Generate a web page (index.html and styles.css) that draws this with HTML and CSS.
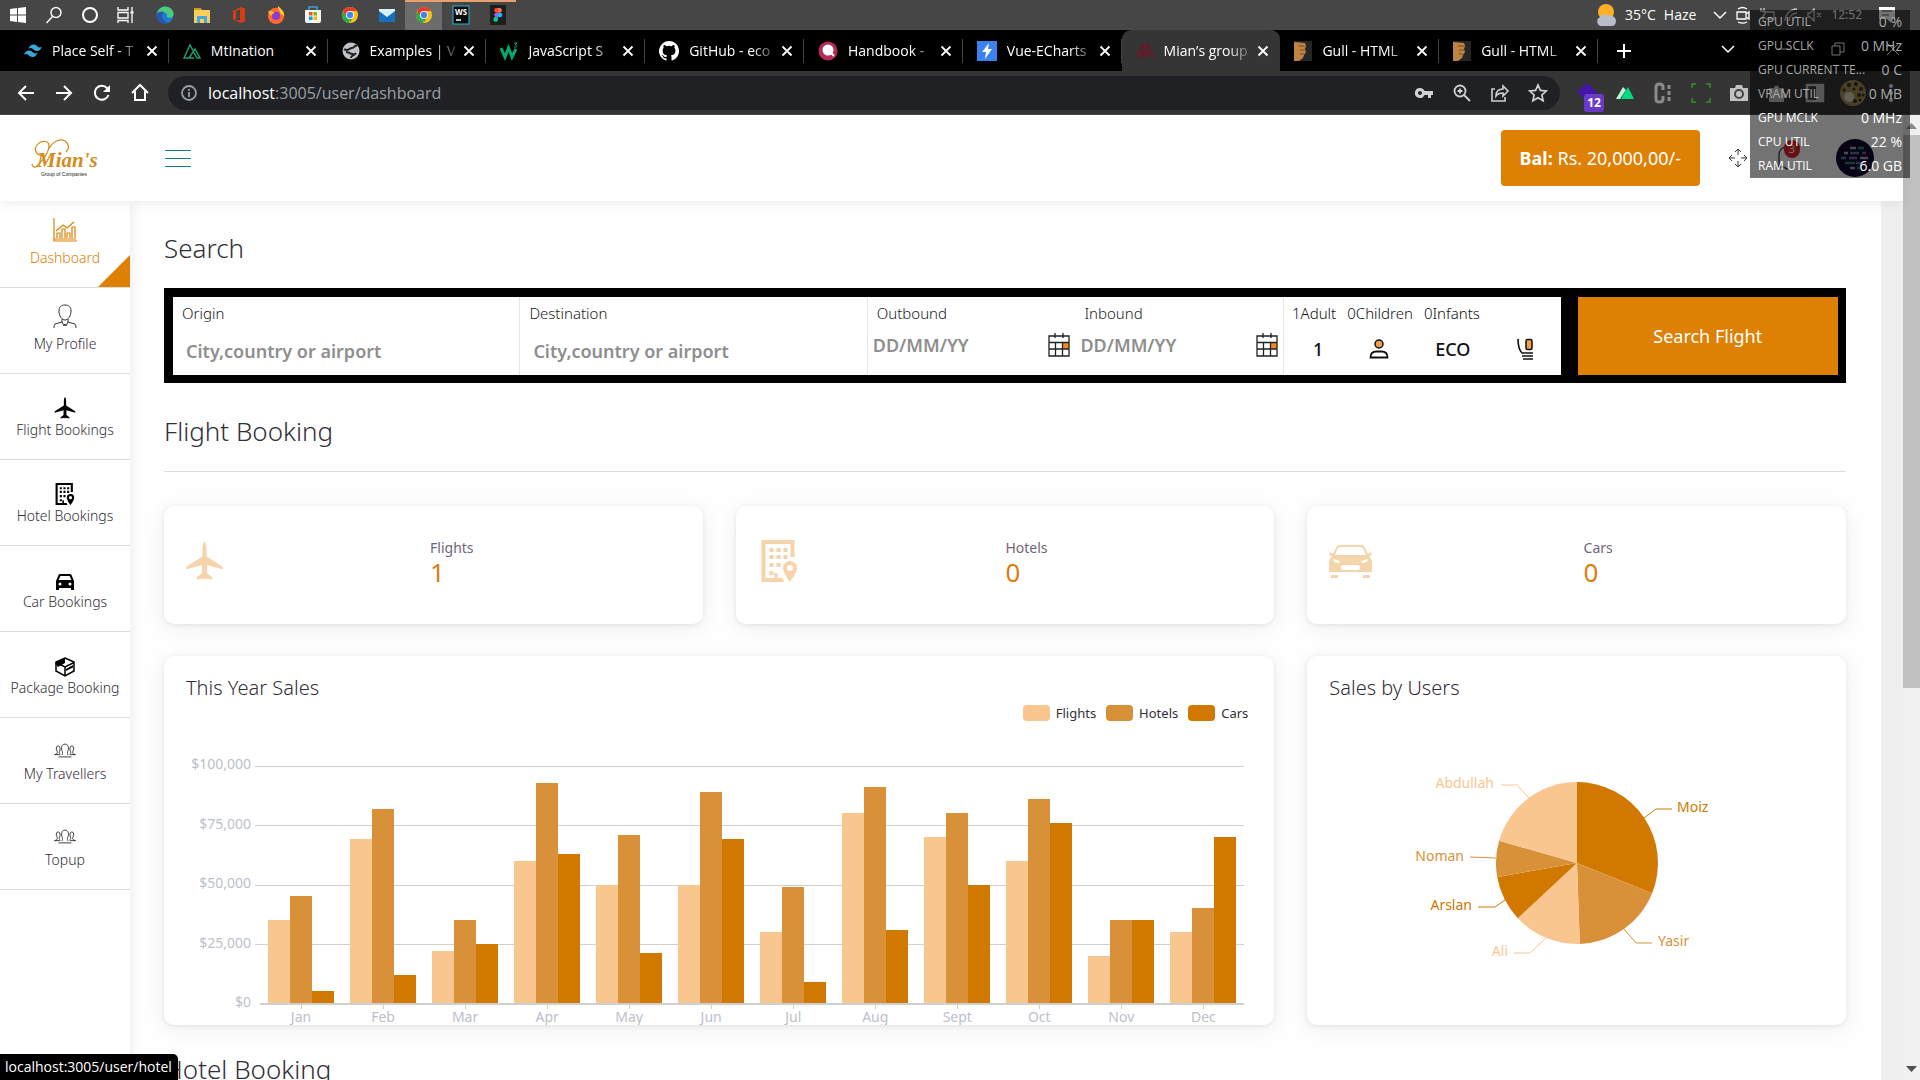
FILE: index.html
```html
<!DOCTYPE html>
<html lang="en">
<head>
<meta charset="utf-8">
<title>Mian's group</title>
<link rel="stylesheet" href="styles.css">
</head>
<body>
<svg class="defs" aria-hidden="true">
  <defs>
    <symbol id="x" viewBox="0 0 12 12"><path d="M1.500 1.500l9 9M10.500 1.500l-9 9" fill="none" stroke="currentColor" stroke-width="1.800"/></symbol>
    <symbol id="chevron" viewBox="0 0 14 14"><path d="M1 4l6 6 6-6" fill="none" stroke="currentColor" stroke-width="1.500"/></symbol>
    <symbol id="chrome" viewBox="0 0 20 20">
      <circle cx="10" cy="10" r="9" fill="#fbc116"/>
      <path d="M2.200 5.500A9 9 0 0 1 17.800 5.500H10A4.500 4.500 0 0 0 6.100 12.200z" fill="#e33b2e"/>
      <path d="M2.200 5.500L6.100 12.200A4.500 4.500 0 0 0 10 14.500L9 19A9 9 0 0 1 2.200 5.500z" fill="#2da94f"/>
      <path d="M10 14.500l3.800-2.300L9.500 19z" fill="#2da94f"/>
      <circle cx="10" cy="10" r="4.400" fill="#fff"/><circle cx="10" cy="10" r="3.500" fill="#4284f4"/>
    </symbol>
    <symbol id="plane" viewBox="0 0 36 38"><path d="M18 0c1.500 1.500 2 5 2 8v6.500l15 9.500c1 .8 1 2.500.8 3L20.500 23v8l5 3.800V37L19 36l-1 1.500L17 36l-6.500 1v-2.200l5-3.800v-8L.2 27c-.2-.5-.2-2.200.8-3l15-9.500V8c0-3 .5-6.500 2-8z" fill="currentColor"/></symbol>
    <symbol id="hotel" viewBox="0 0 36 42">
      <path d="M0 0h33v17h-4V4H4v34h9v-5h3v5h5l2 4H0z" fill="currentColor"/>
      <path d="M8 8h4v4H8zm7 0h4v4h-4zm7 0h4v4h-4zM8 15h4v4H8zm7 0h4v4h-4zm7 0h4v4h-4zM8 23h4v4H8zm7 0h4v4h-4zM8 31h4v4H8z" fill="currentColor"/>
      <path d="M28.500 21a7 7 0 0 1 7 7c0 5-7 14-7 14s-7-9-7-14a7 7 0 0 1 7-7zm0 4a3 3 0 1 0 0 6 3 3 0 0 0 0-6z" fill="currentColor"/>
    </symbol>
    <symbol id="people" viewBox="0 0 24 16">
      <g fill="none" stroke="currentColor" stroke-width="1">
        <path d="M9 9C7.500 6 8 1 12 1s4.500 5 3 8c-.5 2-.5 3 .5 4M9 9c.5 2 .5 3-.5 4M5 15h14"/>
        <path d="M3.500 9C2 7 2 3 4.500 3S7 7 6 9c-.5 1-.5 2 1 3M3.500 9c.5 2 0 3-3 3.500h6"/>
        <path d="M20.500 9C22 7 22 3 19.500 3S17 7 18 9c.5 1 .5 2-1 3M20.500 9c-.5 2 0 3 3 3.500h-6"/>
      </g>
    </symbol>
    <symbol id="calendar" viewBox="0 0 22 24">
      <path d="M14 10h7v6h-7z" fill="#f08c1e"/>
      <path d="M1 3h20v20H1zM1 9.500h20M1 16h20M7.500 9.500V23M14.500 9.500V23M7 0v5M15 0v5" fill="none" stroke="#222" stroke-width="1.300"/>
    </symbol>
    <symbol id="gull" viewBox="0 0 18 20"><path d="M0 0h18v20H0z" fill="#262626"/><path d="M0 1l11 1 1 3-1 3 1 3-2 3-1 3-4 3H0z" fill="#bd8443"/><path d="M5 5h6M6 9h5M6 13h4" stroke="#7c4d20"/></symbol>
  </defs>
</svg>

<div class="screen">
  <div class="taskbar">
    <div class="task system"><svg width="18" height="18" viewBox="0 0 18 18"><path d="M1 3l7-1v6.500H1zM9 2l8-1v7.500H9zM1 9.500h7V16l-7-1zM9 9.500h8V17l-8-1z" fill="#fff"/></svg></div>
    <div class="task system"><svg width="18" height="18" viewBox="0 0 18 18"><g fill="none" stroke="#fff" stroke-width="1.400"><circle cx="11" cy="6.500" r="5"/><path d="M7.500 10.500L1.500 17"/></g></svg></div>
    <div class="task system"><svg width="18" height="18" viewBox="0 0 18 18"><circle cx="9" cy="9" r="7" fill="none" stroke="#fff" stroke-width="2"/></svg></div>
    <div class="task system"><svg width="18" height="18" viewBox="0 0 18 18"><g fill="none" stroke="#fff" stroke-width="1.300"><path d="M1 1v3h10V1M1 6.500h10v5.500H1zM1 17v-2.500h10V17M15 1v4M15 8v9"/><path d="M13.500 6.500h3" stroke-width="2.500"/></g></svg></div>
    <div class="task"><svg width="18" height="18" viewBox="0 0 20 20"><circle cx="10" cy="10" r="9.500" fill="#1a7fd0"/><path d="M1 8C3 2 9-1 14 1.500c5 2 6.500 7 5 9.500-2 3-7 2-7 1 1-2 0-5-4-5-3 0-6 0-7 1z" fill="#4ccb7a"/><path d="M1 9c3-4 7-3 8-2-3 1-4 9 4 11-7 4-13-2-12-9z" fill="#2c54b0"/></svg></div>
    <div class="task"><svg width="18" height="18" viewBox="0 0 18 18"><path d="M1 2h6l2 2h8v13H1z" fill="#f8cf5d"/><path d="M1 2h6l2 2H1z" fill="#d99a1c"/><path d="M4 10h10v7h-3v-4H7v4H4z" fill="#4aa3df"/></svg></div>
    <div class="task"><svg width="18" height="18" viewBox="0 0 18 18"><path d="M11 1l4 1.500v13L11 17l-7-3 6 .5V3.500L6 5v8l-3 1V5z" fill="#d93c12"/></svg></div>
    <div class="task"><svg width="18" height="18" viewBox="0 0 20 20"><circle cx="10" cy="11" r="9" fill="#ff6a2b"/><path d="M12 0c4 3 8 7 7 12-1-2-2-3-4-3 0-4-3-5-3-9z" fill="#ffcf33"/><circle cx="10" cy="11" r="4.500" fill="#8a3bd8"/><path d="M2 5c2 1 4 0 6 2 0 2-3 2-3 4-2-1-4-3-3-6z" fill="#ffb02e"/></svg></div>
    <div class="task"><svg width="18" height="18" viewBox="0 0 18 18"><path d="M5 4V1h8v3" fill="none" stroke="#39a0e5" stroke-width="1.500"/><path d="M1 4h16v11a2 2 0 0 1-2 2H3a2 2 0 0 1-2-2z" fill="#f4f4f4"/><path d="M5 6h3.500v3.500H5z" fill="#f25022"/><path d="M9.500 6H13v3.500H9.500z" fill="#7fba00"/><path d="M5 10.500h3.500V14H5z" fill="#00a4ef"/><path d="M9.500 10.500H13V14H9.500z" fill="#ffb900"/></svg></div>
    <div class="task"><svg width="18" height="18"><use href="#chrome"/></svg></div>
    <div class="task"><svg width="18" height="18" viewBox="0 0 18 18"><path d="M1 3h16v13H1z" fill="#2b8fdd"/><path d="M1 4l8 7 8-7v12H1z" fill="#1570c0"/><path d="M1 3h16v2l-8 6-8-6z" fill="#d9f0ff"/></svg></div>
    <div class="task open active"><svg width="18" height="18"><use href="#chrome"/></svg></div>
    <div class="task open"><svg width="18" height="20" viewBox="0 0 18 20"><rect x="1" y="1" width="16" height="18" fill="#0b0b0b" stroke="#25b7d3"/><text x="9" y="10" class="ws">WS</text><path d="M4 15h5" stroke="#fff" stroke-width="1.500"/></svg></div>
    <div class="task open"><svg width="18" height="20" viewBox="0 0 18 20"><rect x="1" width="16" height="20" fill="#1e1e1e"/><path d="M9 3H7.500a2.300 2.300 0 0 0 0 4.700H9z" fill="#f24e1e"/><path d="M9 3h1.500a2.300 2.300 0 0 1 0 4.700H9z" fill="#ff7262"/><path d="M9 7.700H7.500a2.300 2.300 0 0 0 0 4.600H9z" fill="#a259ff"/><circle cx="11" cy="10" r="2.300" fill="#1abcfe"/><path d="M9 12.300H7.500A2.300 2.300 0 1 0 9 14.700z" fill="#0acf83"/></svg></div>
    <div class="tray">
      <svg width="22" height="24" viewBox="0 0 22 24"><circle cx="11" cy="9" r="8" fill="#fdb022"/><path d="M5 23a5 5 0 0 1 0-9c1-3 7-4 9-1 4-1 7 2 7 5s-2 5-4 5z" fill="#b9bccb"/></svg>
      <span class="weather">35°C</span><span class="weather">Haze</span>
      <svg class="tray-chevron" width="14" height="14"><use href="#chevron"/></svg>
      <svg width="16" height="18" viewBox="0 0 16 18"><path d="M2 6h9v7H2zM11 8l3-2v7l-3-2M3 3c3-2 6-2 9 0M3 16c3 1.500 6 1.500 9 0" fill="none" stroke="#fff" stroke-width="1.300"/></svg>
      <svg width="16" height="16" viewBox="0 0 16 16"><path d="M4 5h11v7H7M2 1v4M5 1v3M1 4h5v3l-2 2v5" fill="none" stroke="#ccc" stroke-width="1.300"/></svg>
      <svg width="16" height="16" viewBox="0 0 16 16"><path d="M2 14A12 12 0 0 1 14 2M6 14a8 8 0 0 1 8-8M10 14a4 4 0 0 1 4-4" fill="none" stroke="#ccc" stroke-width="1.300"/></svg>
      <svg width="16" height="16" viewBox="0 0 16 16"><path d="M1 6h2l4-4v12l-4-4H1zM10 6l4 4M14 6l-4 4" fill="none" stroke="#ccc" stroke-width="1.300"/></svg>
      <span class="clock">12:52</span>
      <svg width="18" height="18" viewBox="0 0 18 18"><path d="M1 1h16v12h-4v4l-4-4H1z" fill="#fff"/><path d="M4 5h10M4 9h7" stroke="#555"/></svg>
    </div>
  </div>

  <div class="tabstrip">
    <div class="tabs">
      <div class="tab"><svg width="18" height="20" viewBox="0 0 18 20"><path d="M4.500 8q1.200-4.500 5-4.500c3.500 0 4 3 6 3q1.500 0 2.500-1.500-1.200 5-5 5c-3.500 0-4-3-6-3q-1.500 0-2.500 1zM0 14q1.200-4.500 5-4.500c3.500 0 4 3 6 3q1.500 0 2.500-1.500-1.200 5-5 5c-3.500 0-4-3-6-3Q1 13 0 14z" fill="#38a9dc"/></svg><span class="tab-title">Place Self - T</span><button class="tab-close" aria-label="Close tab"><svg width="12" height="12"><use href="#x"/></svg></button></div>
      <div class="tab"><svg width="18" height="20" viewBox="0 0 18 20"><path d="M11 17H1L7 4l7 13h3L12 8 6 17" fill="none" stroke="#1f9b6a" stroke-width="1.500"/></svg><span class="tab-title short">MtInation</span><button class="tab-close" aria-label="Close tab"><svg width="12" height="12"><use href="#x"/></svg></button></div>
      <div class="tab"><svg width="18" height="20" viewBox="0 0 18 20"><circle cx="9" cy="10" r="8.500" fill="#bfc2c6"/><path d="M2 8c4 3 5-1 8-1s2-3 5-2M4 11c3 0 4 3 9 2M9 17c0-3 3-2 5-5" fill="none" stroke="#222" stroke-width="2"/></svg><span class="tab-title">Examples | V</span><button class="tab-close" aria-label="Close tab"><svg width="12" height="12"><use href="#x"/></svg></button></div>
      <div class="tab"><svg width="18" height="20" viewBox="0 0 18 20"><path d="M1 7l4 9 3.500-9L12 16l4-8" fill="none" stroke="#04aa6d" stroke-width="3"/><path d="M14 2h3l-2 2c3 0 2 3-1 2" fill="none" stroke="#04aa6d"/></svg><span class="tab-title">JavaScript S</span><button class="tab-close" aria-label="Close tab"><svg width="12" height="12"><use href="#x"/></svg></button></div>
      <div class="tab"><svg width="20" height="20" viewBox="0 0 16 16"><path d="M8 0a8 8 0 0 0-2.530 15.590c.4.070.550-.170.550-.380l-.010-1.490c-2.010.370-2.530-.490-2.690-.940-.090-.230-.480-.940-.820-1.130-.280-.150-.680-.520-.010-.530.630-.010 1.080.580 1.230.820.720 1.210 1.870.870 2.330.660.070-.520.280-.870.510-1.070-1.780-.200-3.640-.890-3.640-3.950 0-.870.310-1.590.820-2.150-.080-.200-.360-1.020.080-2.120 0 0 .670-.210 2.200.820a7.600 7.600 0 0 1 4 0c1.530-1.040 2.200-.820 2.200-.820.440 1.100.160 1.920.080 2.120.510.560.820 1.270.820 2.150 0 3.070-1.870 3.750-3.650 3.950.290.250.540.730.540 1.480l-.010 2.200c0 .210.150.460.550.380A8 8 0 0 0 8 0z" fill="#fff"/></svg><span class="tab-title">GitHub - eco</span><button class="tab-close" aria-label="Close tab"><svg width="12" height="12"><use href="#x"/></svg></button></div>
      <div class="tab"><svg width="20" height="20" viewBox="0 0 20 20"><circle cx="10" cy="10" r="9.500" fill="#b32c56"/><circle cx="10" cy="9" r="5.500" fill="#fff"/><path d="M13 12l3 3" stroke="#fff" stroke-width="2"/></svg><span class="tab-title">Handbook -</span><button class="tab-close" aria-label="Close tab"><svg width="12" height="12"><use href="#x"/></svg></button></div>
      <div class="tab"><svg width="20" height="20" viewBox="0 0 20 20"><path d="M0 0h20v20H0z" fill="#3b82f0"/><path d="M12 2L5 11h4l-1 7 7-10h-4z" fill="#fff"/></svg><span class="tab-title">Vue-ECharts</span><button class="tab-close" aria-label="Close tab"><svg width="12" height="12"><use href="#x"/></svg></button></div>
      <div class="tab current"><svg width="18" height="20" viewBox="0 0 18 20"><path d="M1 17l5-13 3 3 3-4 5 14M5 13h8M7 17V9M11 17V8" fill="none" stroke="#6d1623" stroke-width="2"/></svg><span class="tab-title">Mian’s group</span><button class="tab-close" aria-label="Close tab"><svg width="12" height="12"><use href="#x"/></svg></button></div>
      <div class="tab"><svg width="18" height="20"><use href="#gull"/></svg><span class="tab-title">Gull - HTML</span><button class="tab-close" aria-label="Close tab"><svg width="12" height="12"><use href="#x"/></svg></button></div>
      <div class="tab"><svg width="18" height="20"><use href="#gull"/></svg><span class="tab-title">Gull - HTML</span><button class="tab-close" aria-label="Close tab"><svg width="12" height="12"><use href="#x"/></svg></button></div>
    </div>
    <button class="new-tab" aria-label="New tab"><svg width="16" height="16" viewBox="0 0 16 16"><path d="M8 1v14M1 8h14" stroke="#fff" stroke-width="2"/></svg></button>
    <div class="window-controls">
      <svg width="14" height="14"><use href="#chevron"/></svg>
      <svg width="14" height="14" viewBox="0 0 14 14"><path d="M1 7h12" stroke="#fff"/></svg>
      <svg width="14" height="14" viewBox="0 0 14 14"><path d="M1 4h8v9H1zM4 4V1h9v9H9" fill="none" stroke="#fff"/></svg>
      <svg width="14" height="14" viewBox="0 0 14 14"><path d="M1 1l12 12M13 1L1 13" stroke="#fff"/></svg>
    </div>
  </div>

  <div class="toolbar">
    <div class="nav">
      <button aria-label="Back"><svg width="20" height="20" viewBox="0 0 20 20"><path d="M18 10H3M10 3l-7 7 7 7" fill="none" stroke="#fff" stroke-width="2"/></svg></button>
      <button aria-label="Forward"><svg width="20" height="20" viewBox="0 0 20 20"><path d="M2 10h15M10 3l7 7-7 7" fill="none" stroke="#fff" stroke-width="2"/></svg></button>
      <button aria-label="Reload"><svg width="20" height="20" viewBox="0 0 20 20"><path d="M16.500 12A7 7 0 1 1 15 5l1.500 2" fill="none" stroke="#fff" stroke-width="2"/><path d="M18 2v7h-7z" fill="#fff"/></svg></button>
      <button aria-label="Home"><svg width="20" height="20" viewBox="0 0 20 20"><path d="M2 10l8-8 8 8M5 8v9h10V8" fill="none" stroke="#fff" stroke-width="2"/></svg></button>
    </div>
    <div class="omnibox">
      <svg width="18" height="18" viewBox="0 0 18 18"><circle cx="9" cy="9" r="7" fill="none" stroke="#9aa0a6" stroke-width="1.800"/><path d="M9 8v5M9 5v1.800" stroke="#9aa0a6" stroke-width="1.800"/></svg>
      <div class="url"><span class="host">localhost</span>:3005/user/dashboard</div>
      <div class="omni-icons">
        <svg width="20" height="20" viewBox="0 0 20 20"><path d="M6 5a5 5 0 1 0 4.500 7H14v3h3v-3h2V8h-8.500A5 5 0 0 0 6 5zm0 3a2 2 0 1 1 0 4 2 2 0 0 1 0-4z" fill="#cfd1d4"/></svg>
        <svg width="20" height="20" viewBox="0 0 20 20"><g fill="none" stroke="#cfd1d4" stroke-width="1.800"><circle cx="8" cy="8" r="5.500"/><path d="M12 12l6 6M5.500 8h5M8 5.500v5"/></g></svg>
        <svg width="20" height="20" viewBox="0 0 20 20"><path d="M5 6H2v12h13v-4M6 13c0-5 3-7 7-7V3l5 5-5 5v-3c-3 0-5 0-7 3z" fill="none" stroke="#cfd1d4" stroke-width="1.600"/></svg>
        <svg width="20" height="20" viewBox="0 0 20 20"><path d="M10 2l2.400 5.400 5.800.6-4.300 4 1.200 5.800-5.100-3-5.100 3L6.100 12 1.800 8l5.800-.6z" fill="none" stroke="#cfd1d4" stroke-width="1.700"/></svg>
      </div>
    </div>
    <div class="extensions">
      <div class="ext counted"><svg width="20" height="20" viewBox="0 0 20 20"><path d="M10 0l10 9-10 9L0 9z" fill="#4316a8"/></svg><span class="count">12</span></div>
      <div class="ext"><svg width="20" height="20" viewBox="0 0 20 20"><path d="M1 16L8 4l3 3-6 9z" fill="#b9f5db"/><path d="M6 16l7-12 6 12z" fill="#00dc82"/></svg></div>
      <div class="ext"><svg width="20" height="24" viewBox="0 0 20 24"><path d="M10 9V6q0-3-3.500-3T3 6v12q0 3 3.500 3t3.500-3v-3M16 4v4M16 10v4M16 16v4" fill="none" stroke="#8b8b8b" stroke-width="3"/></svg></div>
      <div class="ext"><svg width="20" height="20" viewBox="0 0 20 20"><path d="M1 5V1h4M15 1h4v4M19 15v4h-4M5 19H1v-4" fill="none" stroke="#3a8a2c" stroke-width="1.500"/></svg></div>
      <div class="ext"><svg width="20" height="20" viewBox="0 0 20 20"><path d="M1 5h5l1-3h6l1 3h5v13H1z" fill="#c2c2c2"/><circle cx="10" cy="11" r="4" fill="#c2c2c2" stroke="#444" stroke-width="2"/></svg></div>
      <div class="ext"><svg width="20" height="20" viewBox="0 0 20 20"><path d="M2 5h5a2.500 2.500 0 1 1 5 0h5v5a2.500 2.500 0 1 1 0 5v4H2v-5a2 2 0 1 0 0-4z" fill="#c2c2c2"/></svg></div>
      <div class="ext"><svg width="20" height="20" viewBox="0 0 20 20"><path d="M2 2h16v16H2z" fill="none" stroke="#c2c2c2" stroke-width="2.500"/><path d="M11 2h7v16h-7z" fill="#c2c2c2"/></svg></div>
      <div class="ext"><svg width="26" height="26" viewBox="0 0 26 26"><circle cx="13" cy="13" r="13" fill="#a58f58"/><g fill="#39301d"><circle cx="9" cy="5" r="2"/><circle cx="16" cy="4" r="2"/><circle cx="21" cy="9" r="2"/><circle cx="14" cy="9" r="1.500"/><circle cx="4" cy="10" r="1.500"/><circle cx="19" cy="15" r="2"/><circle cx="23" cy="15" r="1.500"/><circle cx="15" cy="21" r="2"/><circle cx="20" cy="20" r="1.500"/></g><circle cx="9" cy="17" r="5" fill="#d9d3c4"/></svg></div>
      <div class="ext"><svg width="20" height="20" viewBox="0 0 20 20"><g fill="#e8e8e8"><circle cx="10" cy="3" r="2"/><circle cx="10" cy="10" r="2"/><circle cx="10" cy="17" r="2"/></g></svg></div>
    </div>
  </div>

  <div class="page">
    <div class="app">
      <header class="app-header">
        <a class="logo" href="#" aria-label="Mian's Group of Companies">
          <svg width="68" height="40" viewBox="0 0 68 40">
            <path d="M14 17C7 19 3 12 7 7s12-5 12 1-6 14-12 20c-2 2-5 1-5-2M18 12c5-9 12-12 17-9 5 4 4 8 1 11" fill="none" stroke="#d38d1d" stroke-width="1.200"/>
            <text x="7" y="29" class="logo-name">Mian's</text>
            <text x="34" y="38" class="logo-sub">Group of Companies</text>
          </svg>
        </a>
        <button class="menu-toggle" aria-label="Toggle menu"><span></span><span></span><span></span></button>
        <button class="balance"><b>Bal:</b> Rs. 20,000,00/-</button>
        <div class="header-tools">
          <svg width="20" height="20" viewBox="0 0 20 20"><path d="M10 1v6M10 13v6M1 10h6M13 10h6M7 4l3-3 3 3M7 16l3 3 3-3M4 7l-3 3 3 3M16 7l3 3-3 3" fill="none" stroke="#333"/></svg>
          <div class="bell"><svg width="26" height="28" viewBox="0 0 26 28"><path d="M3 23h7M4 23V11q0-6 6-8h6M10 23q0 2 3 2" fill="none" stroke="#333" stroke-width="1.200"/></svg><span class="badge">3</span></div>
          <svg width="38" height="38" viewBox="0 0 38 38"><circle cx="19" cy="19" r="19" fill="#100730"/><g stroke-width="2.500"><path d="M14 9h6M8 14h4M24 19h8M14 29h5" stroke="#a9a3b9"/><path d="M22 9h6M9 24h10M21 29h4" stroke="#1d8b72"/><path d="M14 14h9M5 19h5M20 24h5" stroke="#4b7f9a"/><path d="M13 19h8M26 14h4M26 24h4" stroke="#7c59a8"/></g></svg>
        </div>
      </header>

      <div class="app-body">
        <nav class="sidebar">
          <a class="side-item selected" href="#"><svg width="24" height="24" viewBox="0 0 24 24"><path d="M1 0v23h23M1 21h22M3 13l7-6 4 3 7-6M4 20v-5h3v5M9 20V11h3v9M14 20v-5h3v5M19 20V9h3v11" fill="none" stroke="currentColor" stroke-width="1.200"/></svg><span>Dashboard</span></a>
          <a class="side-item" href="#"><svg width="24" height="24" viewBox="0 0 24 24"><path d="M12 1c-4 0-6 2-6 6 0 5 3 9 6 9s6-4 6-9c0-4-2-6-6-6zM9 15v3l-7 2q-1 1-1 4M15 15v3l7 2q1 1 1 4M9 18l2 4 1-2 1 2 2-4" fill="none" stroke="currentColor"/></svg><span>My Profile</span></a>
          <a class="side-item" href="#"><svg class="solid" width="22" height="22"><use href="#plane"/></svg><span>Flight Bookings</span></a>
          <a class="side-item" href="#"><svg class="solid" width="20" height="22"><use href="#hotel"/></svg><span>Hotel Bookings</span></a>
          <a class="side-item" href="#"><svg class="solid" width="18" height="18" viewBox="0 0 18 18"><path d="M4 1h10q1.200 0 1.600 1.200L18 8v9h-3v-2H3v2H0V8l2.400-5.800Q2.800 1 4 1zm.4 2L2.700 7h12.600l-1.700-4zM4 9.500a1.500 1.500 0 1 0 0 3 1.500 1.500 0 0 0 0-3zm10 0a1.500 1.500 0 1 0 0 3 1.500 1.500 0 0 0 0-3z" fill="currentColor"/></svg><span>Car Bookings</span></a>
          <a class="side-item" href="#"><svg class="solid" width="20" height="20" viewBox="0 0 20 20"><path d="M10 1l9 4v9l-9 5-9-5V5zM1 5.500l9 4.500 9-4.500M10 10v9" fill="none" stroke="currentColor" stroke-width="1.500"/><path d="M10 1L0 6l3 4 7-4zM11 12l7-4v2.500l-7 3.500z" fill="currentColor"/></svg><span>Package Booking</span></a>
          <a class="side-item" href="#"><svg width="22" height="15"><use href="#people"/></svg><span>My Travellers</span></a>
          <a class="side-item" href="#"><svg width="22" height="15"><use href="#people"/></svg><span>Topup</span></a>
        </nav>

        <main class="content">
          <h2>Search</h2>
          <form class="search-box">
            <div class="field place"><label for="origin">Origin</label><input id="origin" type="text" placeholder="City,country or airport"></div>
            <div class="field place"><label for="destination">Destination</label><input id="destination" type="text" placeholder="City,country or airport"></div>
            <div class="field dates">
              <div class="date"><label for="outbound">Outbound</label><div class="date-row"><input id="outbound" type="text" placeholder="DD/MM/YY"><svg width="22" height="24"><use href="#calendar"/></svg></div></div>
              <div class="date"><label for="inbound">Inbound</label><div class="date-row"><input id="inbound" type="text" placeholder="DD/MM/YY"><svg width="22" height="24"><use href="#calendar"/></svg></div></div>
            </div>
            <div class="field travellers">
              <div class="counts"><span>1Adult</span><span>0Children</span><span>0Infants</span></div>
              <div class="picks">
                <button type="button">1</button>
                <svg width="20" height="20" viewBox="0 0 20 20"><circle cx="10" cy="5" r="4" fill="#f0a04b" stroke="#111" stroke-width="1.500"/><path d="M1.500 18.500q0-6 6-6h5q6 0 6 6z" fill="none" stroke="#111" stroke-width="1.800"/></svg>
                <button type="button">ECO</button>
                <svg width="18" height="22" viewBox="0 0 18 22"><path d="M2 1q0 10 4 14h11M6 18h11M7 21h10" fill="none" stroke="#111" stroke-width="1.600"/><rect x="10" y="1.500" width="6" height="10" rx="1.500" fill="#f0a04b" stroke="#111" stroke-width="1.500"/></svg>
              </div>
            </div>
            <button type="submit" class="search-btn">Search Flight</button>
          </form>

          <h2 class="section">Flight Booking</h2>
          <hr>
          <div class="cards">
            <section class="card stat"><svg width="37" height="40"><use href="#plane"/></svg><div class="stat-text"><p>Flights</p><strong>1</strong></div></section>
            <section class="card stat"><svg width="43" height="42"><use href="#hotel"/></svg><div class="stat-text"><p>Hotels</p><strong>0</strong></div></section>
            <section class="card stat"><svg width="43" height="34" viewBox="0 0 43 34"><path d="M11 1h21q3 0 4 3l3 6 3-2 1 3-3 1q3 3 3 6v10H0V18q0-3 3-6l-3-1 1-3 3 2 3-6q1-3 4-3zm1 2q-3 0-4 3l-2 5h31l-2-5q-1-3-4-3zM4 15q0 4 7 4 0-3-7-4zm35 0q-7 1-7 4 7 0 7-4zM14 21q-2 0-2 3 0 2 2 2h15q2 0 2-2 0-3-2-3zM1 29h41M2 31h7v3H2zm32 0h7v3h-7z" fill="currentColor" fill-rule="evenodd"/></svg><div class="stat-text"><p>Cars</p><strong>0</strong></div></section>
            <section class="card sales">
              <h3>This Year Sales</h3>
              <div class="legend"><span class="key light">Flights</span><span class="key mid">Hotels</span><span class="key dark">Cars</span></div>
              <div class="chart">
                <div class="y-axis"><span>$100,000</span><span>$75,000</span><span>$50,000</span><span>$25,000</span><span>$0</span></div>
                <div class="plot">
                  <div class="gridlines"><i></i><i></i><i></i><i></i></div>
                  <div class="months">
                    <div class="month"><b class="light" style="height:35%"></b><b class="mid" style="height:45%"></b><b class="dark" style="height:5%"></b></div>
                    <div class="month"><b class="light" style="height:69%"></b><b class="mid" style="height:82%"></b><b class="dark" style="height:12%"></b></div>
                    <div class="month"><b class="light" style="height:22%"></b><b class="mid" style="height:35%"></b><b class="dark" style="height:25%"></b></div>
                    <div class="month"><b class="light" style="height:60%"></b><b class="mid" style="height:93%"></b><b class="dark" style="height:63%"></b></div>
                    <div class="month"><b class="light" style="height:50%"></b><b class="mid" style="height:71%"></b><b class="dark" style="height:21%"></b></div>
                    <div class="month"><b class="light" style="height:50%"></b><b class="mid" style="height:89%"></b><b class="dark" style="height:69%"></b></div>
                    <div class="month"><b class="light" style="height:30%"></b><b class="mid" style="height:49%"></b><b class="dark" style="height:9%"></b></div>
                    <div class="month"><b class="light" style="height:80%"></b><b class="mid" style="height:91%"></b><b class="dark" style="height:31%"></b></div>
                    <div class="month"><b class="light" style="height:70%"></b><b class="mid" style="height:80%"></b><b class="dark" style="height:50%"></b></div>
                    <div class="month"><b class="light" style="height:60%"></b><b class="mid" style="height:86%"></b><b class="dark" style="height:76%"></b></div>
                    <div class="month"><b class="light" style="height:20%"></b><b class="mid" style="height:35%"></b><b class="dark" style="height:35%"></b></div>
                    <div class="month"><b class="light" style="height:30%"></b><b class="mid" style="height:40%"></b><b class="dark" style="height:70%"></b></div>
                  </div>
                </div>
                <div class="x-axis"><span>Jan</span><span>Feb</span><span>Mar</span><span>Apr</span><span>May</span><span>Jun</span><span>Jul</span><span>Aug</span><span>Sept</span><span>Oct</span><span>Nov</span><span>Dec</span></div>
              </div>
            </section>
            <section class="card users">
              <h3>Sales by Users</h3>
              <svg class="pie" width="400" height="220" viewBox="-200 -110 400 220" role="img" aria-label="Sales by Users">
                <path d="M0 0V-81A81 81 0 0 1 75.100 30.300z" fill="#d17800"/>
                <path d="M0 0L75.100 30.300A81 81 0 0 1 2.800 81z" fill="#d89138"/>
                <path d="M0 0L2.800 81A81 81 0 0 1-59.200 55.200z" fill="#fac690"/>
                <path d="M0 0L-59.200 55.200A81 81 0 0 1-79.800 14.100z" fill="#d17800"/>
                <path d="M0 0L-79.800 14.100A81 81 0 0 1-77.900-22.300z" fill="#d89138"/>
                <path d="M0 0L-77.900-22.300A81 81 0 0 1 0-81z" fill="#fac690"/>
                <g fill="none">
                  <path d="M67-45L79-54H95M-72 37L-82 44H-99" stroke="#d17800"/>
                  <path d="M47 66L59 80H75M-81-5L-107-6" stroke="#d89138"/>
                  <path d="M-31 75L-47 90H-63M-48-65L-60-78H-76" stroke="#fac690"/>
                </g>
                <g class="pie-labels">
                  <text x="100" y="-51" fill="#d17800">Moiz</text>
                  <text x="81" y="83" fill="#d89138">Yasir</text>
                  <text x="-69" y="93" fill="#fac690" text-anchor="end">Ali</text>
                  <text x="-105" y="47" fill="#d17800" text-anchor="end">Arslan</text>
                  <text x="-113" y="-2" fill="#d89138" text-anchor="end">Noman</text>
                  <text x="-83" y="-75" fill="#fac690" text-anchor="end">Abdullah</text>
                </g>
              </svg>
            </section>
          </div>
          <h2 class="next">Hotel Booking</h2>
        </main>
        <div class="gutter"></div>
      </div>
    </div>
    <div class="scrollbar">
      <svg width="11" height="6" viewBox="0 0 11 6"><path d="M0 6l5.500-6L11 6z" fill="#8b8b8b"/></svg>
      <div class="thumb"></div>
      <svg class="down" width="11" height="6" viewBox="0 0 11 6"><path d="M0 0l5.500 6L11 0z" fill="#505050"/></svg>
    </div>
  </div>

  <div class="status">localhost:3005/user/hotel</div>

  <dl class="monitor">
    <div class="dim"><dt>GPU UTIL</dt><dd>0 %</dd></div>
    <div class="dim"><dt>GPU SCLK</dt><dd>0 MHz</dd></div>
    <div class="dim"><dt>GPU CURRENT TE...</dt><dd>0 C</dd></div>
    <div class="dim"><dt>VRAM UTIL</dt><dd>0 MB</dd></div>
    <div><dt>GPU MCLK</dt><dd>0 MHz</dd></div>
    <div><dt>CPU UTIL</dt><dd>22 %</dd></div>
    <div><dt>RAM UTIL</dt><dd>6.0 GB</dd></div>
  </dl>
</div>
</body>
</html>
```
FILE: styles.css
```css
* { box-sizing: border-box; }
body { margin: 0; font-family: "Open Sans", "Noto Sans", sans-serif; font-size: 14px; line-height: 20px; color: #332e38; background: #fff; }
button, input { font: inherit; color: inherit; border: 0; padding: 0; background: none; }
h2, h3, p, dl, dd { margin: 0; }
a { color: inherit; text-decoration: none; }
svg { display: block; flex: none; }
.defs { position: absolute; width: 0; height: 0; }
.screen { position: relative; display: flex; flex-direction: column; height: 100vh; overflow: hidden; }

/* Desktop taskbar */
.taskbar { display: flex; flex: none; height: 30px; background: #464646; color: #fff; }
.task { display: flex; align-items: center; justify-content: center; width: 37px; border-top: 2px solid transparent; padding-bottom: 2px; }
.task.system { width: 36px; }
.system + .task:not(.system) { margin-left: 2px; }
.task.open { border-top-color: #e8a06c; }
.task.active { background: #6c6c6c; }
.ws { font: bold 8px "Open Sans", sans-serif; fill: #fff; text-anchor: middle; }
.tray { display: flex; align-items: center; gap: 8px; margin-left: auto; padding-right: 24px; }
.tray-chevron { margin-left: 9px; }
.clock { margin: 0 8px 0 0; font-size: 12px; }

/* Browser tabs */
.tabstrip { display: flex; flex: none; align-items: stretch; height: 41px; padding-left: 10px; background: #000; color: #fff; }
.tabs { display: flex; flex: 1; min-width: 0; }
.tab { position: relative; display: flex; align-items: center; flex: 1; min-width: 0; padding: 0 11px 0 14px; }
.tab::after { content: ""; position: absolute; right: 0; top: 9px; width: 1px; height: 24px; background: #444; }
.tab.current { border-radius: 9px 9px 0 0; background: #353535; }
.tab.current::after { display: none; }
.tab-title { flex: 1; min-width: 0; margin: 0 2px 0 10px; overflow: hidden; white-space: nowrap; -webkit-mask-image: linear-gradient(90deg, #000 70%, transparent); mask-image: linear-gradient(90deg, #000 70%, transparent); }
.tab-title.short { -webkit-mask-image: none; mask-image: none; }
.new-tab { width: 52px; display: flex; align-items: center; justify-content: center; }
.window-controls { display: flex; align-items: center; gap: 41px; padding: 0 20px 4px 71px; }

/* Browser toolbar */
.toolbar { display: flex; flex: none; align-items: center; height: 44px; padding: 0 17px 0 14px; background: #353535; border-bottom: 1px solid #4b4b4b; }
.nav { display: flex; gap: 14px; margin-right: 16px; }
.nav button { display: flex; justify-content: center; width: 24px; }
.omnibox { display: flex; align-items: center; flex: 1; gap: 10px; height: 34px; padding: 0 12px; border-radius: 17px; background: #202124; font-size: 16px; color: #9aa0a6; }
.url { flex: 1; }
.host { color: #fff; }
.omni-icons { display: flex; gap: 18px; }
.extensions { display: flex; align-items: center; gap: 14px; margin-left: 15px; }
.ext { display: flex; justify-content: center; align-items: center; width: 24px; height: 26px; }
.counted { position: relative; }
.count { position: absolute; left: 9px; top: 14px; width: 20px; height: 18px; border-radius: 3px; background: #6a3bcb; color: #fff; font-size: 12px; line-height: 18px; font-weight: 700; text-align: center; }

/* Page frame */
.page { display: flex; flex: 1; min-height: 0; }
.app { display: flex; flex: 1; flex-direction: column; min-width: 0; font-family: "Noto Sans", "Open Sans", sans-serif; }
.scrollbar { display: flex; flex-direction: column; align-items: center; width: 17px; padding-top: 8px; background: #f1f1f1; }
.thumb { width: 17px; height: 553px; margin-top: 6px; background: #c1c1c1; }
.down { margin-top: auto; margin-bottom: 8px; }

/* App header */
.app-header { position: relative; display: flex; align-items: center; flex: none; height: 86px; padding: 0 29px 0 30px; background: #fff; box-shadow: 0 1px 12px rgba(0, 0, 0, .08); z-index: 1; }
.logo svg { overflow: visible; }
.logo-name { font: italic bold 21px "Liberation Serif", serif; fill: #d38d1d; }
.logo-sub { font: 5px "Liberation Sans", sans-serif; fill: #222; text-anchor: middle; }
.menu-toggle { display: flex; flex-direction: column; gap: 7px; width: 26px; margin-left: 67px; }
.menu-toggle span { height: 1px; background: #1a7799; }
.balance { height: 56px; margin-left: auto; padding: 0 19px; border-radius: 4px; background: #dd8003; color: #fff; font-size: 18px; }
.header-tools { display: flex; align-items: center; gap: 27px; margin-left: 28px; }
.bell { position: relative; margin-right: 8px; }
.badge { position: absolute; right: 1px; top: -4px; width: 16px; height: 18px; border-radius: 8px; background: #e4262b; color: #fff; font-size: 11px; line-height: 18px; text-align: center; }

/* Sidebar */
.app-body { display: flex; flex: 1; min-height: 0; }
.sidebar { width: 130px; flex: none; padding-top: 1px; background: #fff; box-shadow: 1px 0 12px rgba(0, 0, 0, .08); z-index: 0; }
.side-item { position: relative; display: flex; flex-direction: column; align-items: center; justify-content: flex-end; height: 86px; padding-bottom: 19px; border-bottom: 1px solid #dcdcdc; gap: 6px; }
.side-item .solid { color: #000; margin-bottom: -5px; }
.side-item.selected { color: #dd8003; }
.side-item.selected::after { content: ""; position: absolute; right: 0; bottom: 0; border-style: solid; border-width: 0 0 32px 32px; border-color: transparent transparent #dd8003; }
.side-item span, h2, h3, label, .counts { font-weight: 300; }

/* Content */
.content { flex: 1; min-width: 0; padding: 30px 35px 0 34px; background: #fefefe; overflow: hidden; }
.gutter { width: 22px; background: #efefef; }
h2 { font-size: 26px; line-height: 34px; }
h3 { padding-left: 22px; font-size: 20px; line-height: 26px; }
.section { margin-top: 31px; }
.next { margin-top: 27px; }
hr { margin: 23px 0 34px; border: 0; border-top: 1px solid #dcdcdc; }

.search-box { display: flex; height: 95px; margin-top: 23px; padding: 9px 8px 8px 9px; background: #000; }
.field { background: #fff; border-right: 1px solid #e4e4e4; padding-top: 6px; }
.field label { display: block; padding-left: 9px; font-size: 15px; color: #222; }
.field input { display: block; min-width: 0; width: 100%; font-size: 18px; font-weight: 600; line-height: 24px; outline: 0; }
.field input::placeholder { color: #8e8e8e; opacity: 1; }
.place { flex: 347; }
.place input { padding-left: 13px; margin-top: 16px; }
.dates { display: flex; flex: 416; }
.date { flex: 1; min-width: 0; }
.date-row { display: flex; align-items: center; margin-top: 10px; padding: 0 5px 0 5px; }
.travellers { flex: 277; border-right: 0; color: #111; }
.counts { display: flex; gap: 11px; padding-left: 8px; font-size: 15px; }
.picks { display: flex; align-items: center; justify-content: space-between; margin-top: 15px; padding: 0 26px 0 29px; font-size: 18px; }
.picks button { font-weight: 500; }
.search-btn { flex: 261; margin-left: 17px; background: #dd8003; color: #fff; font-size: 18px; }

.cards { display: grid; grid-template-columns: repeat(3, 1fr); gap: 32px 33px; }
.card { border-radius: 10px; background: #fff; box-shadow: 0 4px 20px 1px rgba(0, 0, 0, .06), 0 1px 4px rgba(0, 0, 0, .08); }
.stat { display: flex; align-items: center; height: 118px; padding: 0 22px; color: #f5d4ab; }
.stat > svg { margin-bottom: 8px; }
.stat-text { margin: 0 auto; padding-bottom: 6px; }
.stat-text p { color: #70657b; }
.stat-text strong { display: block; font-size: 26px; font-weight: 400; line-height: 28px; color: #d98010; }
.sales { grid-column: span 2; }
.sales, .users { height: 369px; padding-top: 19px; overflow: hidden; }

.legend { display: flex; justify-content: flex-end; gap: 10px; margin-top: 2px; padding-right: 26px; font-size: 13px; }
.key { display: flex; align-items: center; gap: 6px; }
.key::before { content: ""; width: 27px; height: 16px; border-radius: 4px; background: var(--tone); }
.light { --tone: #fac690; }
.mid { --tone: #d89138; }
.dark { --tone: #d17800; }
.chart { display: grid; grid-template-columns: 96px 1fr; margin: 43px 30px 0 0; color: #bcc0cc; }
.y-axis { display: flex; flex-direction: column; justify-content: space-between; align-items: flex-end; height: 258px; margin: -12px 9px -8px 0; }
.plot { display: grid; height: 239px; border-bottom: 2px solid #cfcfcf; }
.gridlines, .months { grid-area: 1 / 1; }
.gridlines { display: grid; grid-template-rows: repeat(4, 1fr); margin-left: -5px; }
.gridlines i { border-top: 1px solid #cfcfcf; }
.months { display: flex; }
.month { display: flex; flex: 1; align-items: flex-end; justify-content: center; }
.month b { width: 22px; background: var(--tone); }
.x-axis { grid-column: 2; display: flex; line-height: 16px; }
.x-axis span { flex: 1; text-align: center; }
.x-axis span::before { content: ""; display: block; width: 1px; height: 4px; margin: 0 auto; background: #cfcfcf; }
.pie { margin: 52px auto 0; }
.pie-labels { font-size: 14px; }

/* Overlays */
.status { position: absolute; left: 0; bottom: 0; z-index: 2; height: 26px; padding: 3px 6px 0 5px; border-radius: 0 5px 0 0; background: #000; color: #fff; line-height: 20px; }
.monitor { position: absolute; right: 10px; top: 10px; z-index: 3; width: 160px; padding: 0 8px; background: rgba(0, 0, 0, .55); color: #fff; }
.monitor div { display: flex; justify-content: space-between; align-items: center; height: 24px; }
.monitor dt { font-size: 12px; white-space: nowrap; }
.monitor .dim { color: #aaa; }
```
